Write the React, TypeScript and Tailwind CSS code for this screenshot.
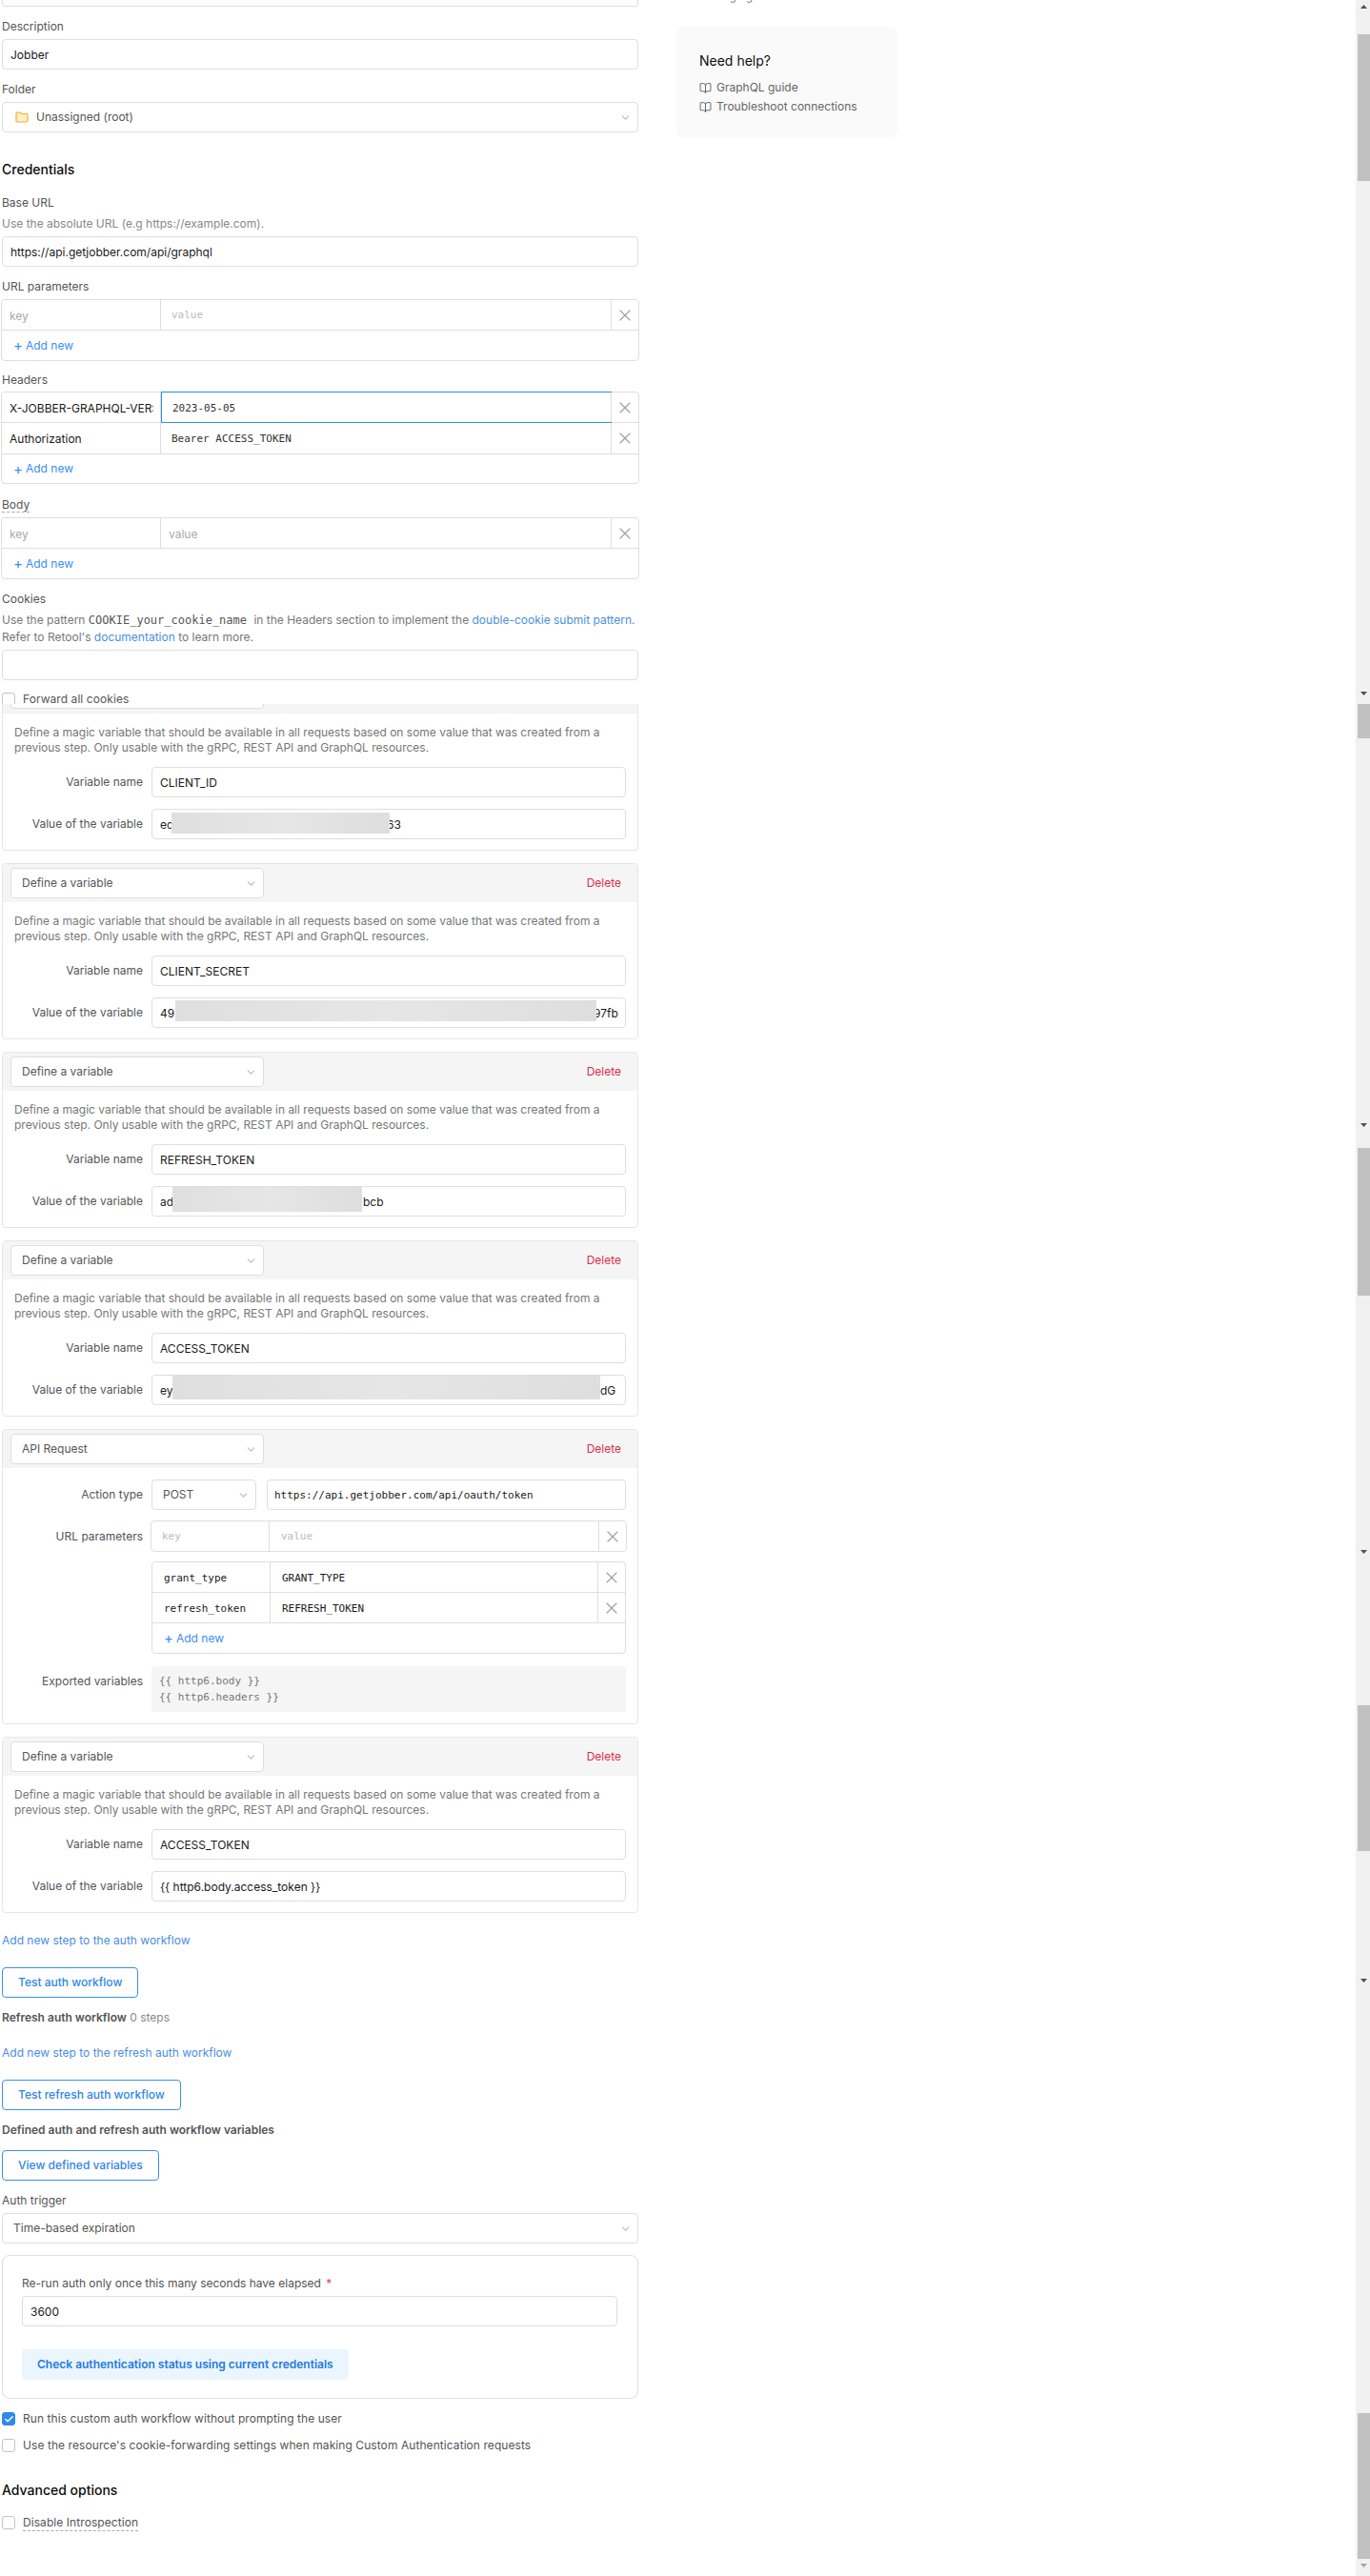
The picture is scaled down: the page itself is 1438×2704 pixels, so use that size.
import React from 'react';
import { BookOpen, Check, ChevronDown, X } from 'lucide-react';

const MAGIC_TEXT = (
  <>
    Define a magic variable that should be available in all requests based on some value that was created from a
    <br />
    previous step. Only usable with the gRPC, REST API and GraphQL resources.
  </>
);

const MONO = "[font-family:'DejaVu_Sans_Mono',monospace]";

function Label({ children, className = '' }: { children: React.ReactNode; className?: string }) {
  return <div className={`h-4 text-xs leading-4 text-[#555555] ${className}`}>{children}</div>;
}

function Field({ children, className = '' }: { children?: React.ReactNode; className?: string }) {
  return (
    <div className={`flex h-8 items-center rounded-[4px] border border-[#dedede] bg-white px-2 pt-[2px] text-xs text-[#1a1a1a] ${className}`}>
      {children}
    </div>
  );
}

function Select({ children, className = '', chevron = 'pr-[6px]' }: { children: React.ReactNode; className?: string; chevron?: string }) {
  return (
    <div className={`flex h-8 items-center justify-between rounded-[4px] border border-[#dedede] bg-white pl-[11px] text-xs text-[#555555] ${chevron} ${className}`}>
      <span className="flex items-center">{children}</span>
      <ChevronDown size={13} strokeWidth={2} className="text-[#bbbbbb]" />
    </div>
  );
}

function KvRow({
  left,
  right,
  leftClass = 'w-[167px] pl-2',
  rightClass = 'pl-[11px]',
  closeClass = 'w-[29px]',
  rowClass = 'h-8',
  focused = false,
  last = false,
}: {
  left: React.ReactNode;
  right: React.ReactNode;
  leftClass?: string;
  rightClass?: string;
  closeClass?: string;
  rowClass?: string;
  focused?: boolean;
  last?: boolean;
}) {
  return (
    <div className={`flex items-stretch text-xs ${last ? 'h-[31px]' : `border-b border-[#dedede] ${rowClass}`}`}>
      <div className={`flex shrink-0 items-center overflow-hidden whitespace-nowrap border-r border-[#dedede] pt-[2px] text-[#1a1a1a] ${leftClass}`}>{left}</div>
      <div className={`flex flex-1 items-center pt-[2px] ${rightClass} ${focused ? '-my-px -mr-px border border-[#2d8fe9]' : ''}`}>{right}</div>
      <div className={`flex shrink-0 items-center justify-center border-l border-[#dedede] text-[#a0a0a0] ${closeClass}`}>
        <X size={20} strokeWidth={1.4} />
      </div>
    </div>
  );
}

function AddNew({ className = 'h-[31px]' }: { className?: string }) {
  return (
    <div className={`flex items-center pl-[12px] text-xs text-[#3b8ef0] ${className}`}>
      <span className="mr-[3px] text-[15px] leading-none">+</span>
      Add new
    </div>
  );
}

function Table({ children, className = '-ml-px w-[670px]' }: { children: React.ReactNode; className?: string }) {
  return <div className={`rounded-[4px] border border-[#dedede] bg-white ${className}`}>{children}</div>;
}

function Row({ label, children, className = '' }: { label: string; children: React.ReactNode; className?: string }) {
  return (
    <div className={`flex ${className}`}>
      <div className="mr-[9px] w-[147px] shrink-0 pt-2 text-right text-xs leading-4 text-[#555555]">{label}</div>
      <div className="min-w-0 flex-1">{children}</div>
    </div>
  );
}

function CardHeader({ title }: { title: string }) {
  return (
    <div className="flex h-10 items-center justify-between bg-[#f5f5f5] pl-[8px] pr-[17px]">
      <Select className="w-[266px]" chevron="pr-[6px]">{title}</Select>
      <span className="text-xs text-[#d9304f]">Delete</span>
    </div>
  );
}

function VariableBody({ name, value }: { name: string; value: React.ReactNode }) {
  return (
    <div className="pb-[11px] pl-3 pr-3 pt-3">
      <p className="text-xs leading-4 text-[#777777]">{MAGIC_TEXT}</p>
      <Row label="Variable name" className="mt-3 -ml-3">
        <Field>{name}</Field>
      </Row>
      <Row label="Value of the variable" className="mt-3 -ml-3">
        {value}
      </Row>
    </div>
  );
}

function VariableCard({ name, value }: { name: string; value: React.ReactNode }) {
  return (
    <div className="mt-[13px] overflow-hidden rounded-[4px] border border-[#e6e6e6]">
      <CardHeader title="Define a variable" />
      <VariableBody name={name} value={value} />
    </div>
  );
}

function Redacted({ prefix, suffix, suffixClass, maskClass }: { prefix: string; suffix: string; suffixClass: string; maskClass: string }) {
  return (
    <Field className="relative overflow-hidden">
      <span>{prefix}</span>
      <span className={`absolute ${suffixClass}`}>{suffix}</span>
      <div className={`absolute bg-gradient-to-r from-[#dfdfdf] via-[#e6e6e6] to-[#dedede] ${maskClass}`} />
    </Field>
  );
}

function CheckRow({ checked = false, className = '', children }: { checked?: boolean; className?: string; children: React.ReactNode }) {
  return (
    <div className={`flex h-[14px] items-center text-xs tracking-[0.07px] text-[#555555] ${className}`}>
      <span className={`mr-2 flex h-[14px] w-[14px] shrink-0 items-center justify-center rounded-[3px] border ${checked ? 'border-[#2f8ae8] bg-[#2f8ae8]' : 'border-[#c4c4c4] bg-white'}`}>
        {checked && <Check size={11} strokeWidth={3} className="text-white" />}
      </span>
      {children}
    </div>
  );
}

function OutlineButton({ children, className = '' }: { children: React.ReactNode; className?: string }) {
  return (
    <div className={`flex h-8 w-fit items-center rounded-[4px] border border-[#3b8ef0] px-4 text-xs font-medium text-[#2f85e8] ${className}`}>
      {children}
    </div>
  );
}

// the capture was stitched from several viewports, so the rail repeats its parts
const THUMBS = ['top-[36px] h-[154px]', 'top-[739px] h-[36px]', 'top-[1205px] h-[155px]', 'top-[1790px] h-[153px]', 'top-[2533px] h-[153px]'];
const ARROWS = ['top-[1179px]', 'top-[1627px]', 'top-[2077px]', 'top-[726px]'];

function ScrollRail() {
  return (
    <div className="relative ml-auto h-full w-[15px] shrink-0 bg-[#f1f1f1]">
      <svg width="7" height="4" viewBox="0 0 7 4" className="absolute left-[5px] top-[5px]">
        <polygon points="3.5,0 7,4 0,4" fill="#505050" />
      </svg>
      {THUMBS.map((t) => (
        <div key={t} className={`absolute left-[2px] right-0 bg-[#c1c1c1] ${t}`} />
      ))}
      {ARROWS.map((a) => (
        <svg key={a} width="7" height="4" viewBox="0 0 7 4" className={`absolute left-[5px] ${a}`}>
          <polygon points="0,0 7,0 3.5,4" fill="#505050" />
        </svg>
      ))}
      <svg width="7" height="4" viewBox="0 0 7 4" className="absolute bottom-[9px] left-[5px]">
        <polygon points="0,0 7,0 3.5,4" fill="#a3a3a3" />
      </svg>
    </div>
  );
}

export default function App() {
  return (
    <div className="flex h-[2704px] w-[1438px] overflow-hidden bg-white [font-family:Inter,sans-serif]">
      {/* Main form column */}
      <div className="ml-[2px] w-[668px] shrink-0">
        <div className="h-[7px] rounded-b-[4px] border-x border-b border-[#dedede]" />

        <Label className="mt-[13px] mb-[5px]">Description</Label>
        <Field>Jobber</Field>

        <Label className="mt-[13px] mb-[5px]">Folder</Label>
        <Select className="!pl-[13px]">
          <svg width="14" height="12" viewBox="0 0 14 12" className="mr-[8px]">
            <path d="M1 2.2C1 1.5 1.5 1 2.2 1h2.9l1.4 1.5h5.3c.7 0 1.2.5 1.2 1.2v6.1c0 .7-.5 1.2-1.2 1.2H2.2C1.500 11 1 10.500 1 9.800z" fill="#fdf0c8" stroke="#f0b030" strokeWidth="1.200" />
          </svg>
          Unassigned (root)
        </Select>

        <h2 className="mt-[29px] h-5 text-sm font-medium leading-5 text-[#0d0d0d]">Credentials</h2>

        <Label className="mt-[17px]">Base URL</Label>
        <p className="mt-[6px] mb-[5px] h-4 text-xs leading-4 text-[#888888]">Use the absolute URL (e.g https://example.com).</p>
        <Field>https://api.getjobber.com/api/graphql</Field>

        <Label className="mt-[13px] mb-[5px]">URL parameters</Label>
        <Table>
          <KvRow left={<span className="text-[#aaaaaa]">key</span>} right={<span className={`text-[11px] text-[#bbbbbb] ${MONO}`}>value</span>} />
          <AddNew />
        </Table>

        <Label className="mt-[12px] mb-[4px]">Headers</Label>
        <Table>
          <KvRow
            left={<span className="block w-[151px] overflow-hidden">X-JOBBER-GRAPHQL-VERSION</span>}
            right={<span className={`mt-[2px] text-[11px] text-[#333333] ${MONO}`}>2023-05-05</span>}
            focused
          />
          <KvRow left="Authorization" right={<span className={`text-[11px] text-[#333333] ${MONO}`}>Bearer ACCESS_TOKEN</span>} rowClass="h-[33px]" />
          <AddNew className="h-[30px]" />
        </Table>

        <div className="mt-[14px] mb-[5px] h-4 w-fit border-b border-dashed border-[#aaaaaa] text-xs leading-[15px] text-[#555555]">Body</div>
        <Table>
          <KvRow left={<span className="text-[#aaaaaa]">key</span>} right={<span className="text-[#aaaaaa]">value</span>} rightClass="pl-2" />
          <AddNew />
        </Table>

        <Label className="mt-[13px]">Cookies</Label>
        <p className="mt-[5px] mb-[4px] whitespace-nowrap text-xs leading-[18px] text-[#777777]">
          Use the pattern <code className={`mr-[4px] text-[12px] text-[#555555] ${MONO}`}>COOKIE_your_cookie_name</code>{' '}
          in the Headers section to implement the <a className="text-[#4a8fe0]">double-cookie submit pattern</a>.
          <br />
          Refer to Retool's <a className="text-[#4a8fe0]">documentation</a> to learn more.
        </p>
        <Field />

        <div className="mt-[13px] h-3 overflow-hidden">
          <CheckRow>Forward all cookies</CheckRow>
        </div>

        {/* Steps of the auth workflow */}
        <div className="overflow-hidden rounded-b-[4px] border-x border-b border-[#e6e6e6]">
          <div className="h-[10px] bg-[#f5f5f5] pl-[8px]">
            <div className="h-[5px] w-[266px] rounded-b-[4px] border-x border-b border-[#dedede] bg-white" />
          </div>
          <VariableBody name="CLIENT_ID" value={<Redacted prefix="ed" suffix="63" suffixClass="left-[246px]" maskClass="left-[20px] top-[3px] h-[22px] w-[229px]" />} />
        </div>

        <VariableCard name="CLIENT_SECRET" value={<Redacted prefix="49" suffix="97fb" suffixClass="left-[463px]" maskClass="left-[24px] top-[2px] h-[22px] w-[442px]" />} />
        <VariableCard name="REFRESH_TOKEN" value={<Redacted prefix="ad" suffix="bcb" suffixClass="left-[221px]" maskClass="left-[21px] -top-px h-[27px] w-[199px]" />} />
        <VariableCard name="ACCESS_TOKEN" value={<Redacted prefix="ey" suffix="dG" suffixClass="left-[470px]" maskClass="left-[21px] -top-px h-[26px] w-[449px]" />} />

        <div className="mt-[13px] overflow-hidden rounded-[4px] border border-[#e6e6e6]">
          <CardHeader title="API Request" />
          <div className="pb-3 pr-3 pt-3">
            <Row label="Action type">
              <div className="flex gap-[11px]">
                <Select className="w-[110px]" chevron="pr-[6px]">POST</Select>
                <Field className={`flex-1 !px-[7px] text-[11px] ${MONO}`}>https://api.getjobber.com/api/oauth/token</Field>
              </div>
            </Row>
            <Row label="URL parameters" className="mt-[11px] [&>div:first-child]:pt-[9px]">
              <Table className="-mx-px">
                <KvRow
                  last
                  left={<span className={`text-[11px] text-[#bbbbbb] ${MONO}`}>key</span>}
                  leftClass="w-[124px] pl-[11px]"
                  right={<span className={`text-[11px] text-[#bbbbbb] ${MONO}`}>value</span>}
                  rightClass="pl-[12px]"
                />
              </Table>
            </Row>
            <Row label="" className="mt-[10px] [&>div:first-child]:pt-0">
              <Table className="">
                <KvRow
                  left={<span className={`mt-[2px] text-[11px] ${MONO}`}>grant_type</span>}
                  leftClass="w-[124px] pl-[12px]"
                  right={<span className={`mt-[2px] text-[11px] text-[#1a1a1a] ${MONO}`}>GRANT_TYPE</span>}
                  rightClass="pl-[12px]"
                  closeClass="w-[29px]"
                />
                <KvRow
                  left={<span className={`mt-[2px] text-[11px] ${MONO}`}>refresh_token</span>}
                  leftClass="w-[124px] pl-[12px]"
                  right={<span className={`mt-[2px] text-[11px] text-[#1a1a1a] ${MONO}`}>REFRESH_TOKEN</span>}
                  rightClass="pl-[12px]"
                  closeClass="w-[29px]"
                />
                <AddNew />
              </Table>
            </Row>
            <Row label="Exported variables" className="mt-[13px]">
              <div className={`h-12 rounded-[4px] bg-[#f5f5f5] px-2 pt-[7px] text-[11px] leading-[17px] text-[#777777] ${MONO}`}>
                <div>{'{{ http6.body }}'}</div>
                <div>{'{{ http6.headers }}'}</div>
              </div>
            </Row>
          </div>
        </div>

        <VariableCard name="ACCESS_TOKEN" value={<Field>{'{{ http6.body.access_token }}'}</Field>} />

        <div className="mt-[21px] h-4 text-xs leading-4 text-[#4a8fe0]">Add new step to the auth workflow</div>
        <OutlineButton className="mt-5">Test auth workflow</OutlineButton>

        <div className="mt-[13px] h-4 text-xs leading-4 text-[#888888]">
          <span className="font-semibold text-[#555555]">Refresh auth workflow</span> 0 steps
        </div>
        <div className="mt-[21px] h-4 text-xs leading-4 text-[#4a8fe0]">Add new step to the refresh auth workflow</div>
        <OutlineButton className="mt-5">Test refresh auth workflow</OutlineButton>

        <div className="mt-[13px] h-4 text-xs font-semibold leading-4 text-[#555555]">Defined auth and refresh auth workflow variables</div>
        <OutlineButton className="mt-[13px]">View defined variables</OutlineButton>

        <Label className="mt-[13px] mb-[5px]">Auth trigger</Label>
        <Select>Time-based expiration</Select>

        <div className="mt-3 h-[151px] rounded-[8px] border border-[#dedede] pl-[20px] pr-[21px] pt-[21px]">
          <Label>
            Re-run auth only once this many seconds have elapsed <span className="ml-[2px] text-[#e0455f]">*</span>
          </Label>
          <Field className="mt-[5px]">3600</Field>
          <div className="mt-6 flex h-8 w-fit items-center rounded-[4px] bg-[#ebf5fe] px-4 text-xs font-semibold text-[#1e7be0]">
            Check authentication status using current credentials
          </div>
        </div>

        <CheckRow checked className="mt-[14px]">Run this custom auth workflow without prompting the user</CheckRow>
        <CheckRow className="mt-[14px]">Use the resource's cookie-forwarding settings when making Custom Authentication requests</CheckRow>

        <h2 className="mt-[30px] h-5 text-sm font-medium leading-5 text-[#0d0d0d]">Advanced options</h2>

        <CheckRow className="mt-[17px]">
          <span className="border-b border-dashed border-[#aaaaaa]">Disable Introspection</span>
        </CheckRow>
      </div>

      {/* Help column */}
      <div className="ml-[40px] w-[232px] shrink-0">
        <div className="h-[3px] overflow-hidden pl-[24px]">
          <div className="-mt-[12px] text-xs leading-4 text-[#888888]">Managing</div>
        </div>
        <div className="mt-[25px] h-[116px] rounded-[8px] bg-[#fafafa] pl-[24px] pt-[26px]">
          <div className="h-5 text-sm leading-5 text-[#0d0d0d]">Need help?</div>
          <div className="mt-[8px] flex h-5 items-center text-xs text-[#666666]">
            <BookOpen size={13} strokeWidth={1.6} className="mr-[5px] text-[#555555]" />
            GraphQL guide
          </div>
          <div className="flex h-5 items-center text-xs text-[#666666]">
            <BookOpen size={13} strokeWidth={1.6} className="mr-[5px] text-[#555555]" />
            Troubleshoot connections
          </div>
        </div>
      </div>

      <ScrollRail />
    </div>
  );
}
